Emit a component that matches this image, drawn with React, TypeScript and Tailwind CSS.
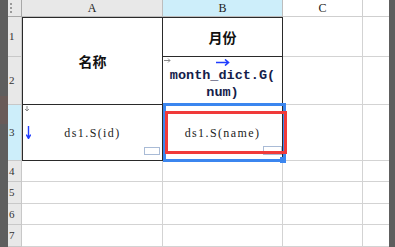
import React from "react";

const grid = "border-r border-b border-[#d3d3d3]";
const mono = { fontFamily: '"Liberation Mono", "Noto Sans CJK SC", monospace' };
const serif = { fontFamily: '"Liberation Serif", "Noto Sans CJK SC", serif' };
const cjk = { fontFamily: '"Noto Sans CJK SC", "Liberation Sans", sans-serif' };

function RowNum({ n, row, active }: { n: number; row: string; active?: boolean }) {
  return (
    <div
      className={`col-start-2 ${row} flex items-center pl-[1px] border-r border-b border-[#c8c8c8] ${
        active ? "bg-[#cdeefa]" : "bg-[#e8e8e8]"
      }`}
    >
      <span className="text-[11px] text-[#333]" style={serif}>
        {n}
      </span>
    </div>
  );
}

function DownArrow({ className }: { className: string }) {
  return (
    <svg width="6" height="6" viewBox="0 0 6 6" className={className}>
      <path d="M3 0V5M1 3L3 5L5 3" stroke="#8a8a8a" strokeWidth="1" fill="none" />
    </svg>
  );
}

function RightArrow({ className }: { className: string }) {
  return (
    <svg width="7" height="5" viewBox="0 0 7 5" className={className}>
      <path d="M0 2.5H6M4 0.5L6 2.5L4 4.5" stroke="#8a8a8a" strokeWidth="1" fill="none" />
    </svg>
  );
}

export default function App() {
  return (
    <div className="relative w-[395px] h-[247px] overflow-hidden bg-white">
      <div className="grid grid-cols-[8px_14px_141px_120px_80px_26px_6px] grid-rows-[17px_40px_48px_56px_21px_22px_21px_22px]">
        {/* side strips */}
        <div className="col-start-1 row-start-1 row-span-8 bg-[#5e5e5e] relative">
          <div className="absolute left-0 top-[96px] w-[8px] h-[28px] bg-[#6e5a55] opacity-70" />
        </div>
        <div className="col-start-7 row-start-1 row-span-8 bg-[#5e5e5e]" />

        {/* header row */}
        <div className="col-start-2 row-start-1 bg-[#e8e8e8] border-r border-b border-[#a8a8a8] flex flex-col gap-[2px] pt-[3px] pl-[2px]">
          <span className="block w-[2px] h-[2px] bg-[#9a9a9a]" />
          <span className="block w-[2px] h-[2px] bg-[#9a9a9a]" />
          <span className="block w-[2px] h-[2px] bg-[#9a9a9a]" />
        </div>
        <div className="col-start-3 row-start-1 bg-[#e8e8e8] border-r border-b border-[#bdbdbd] flex items-center justify-center text-[12px] text-[#222]" style={serif}>
          A
        </div>
        <div className="col-start-4 row-start-1 bg-[#cdeefa] border-r border-b border-[#bdbdbd] flex items-center justify-center text-[12px] text-[#222]" style={serif}>
          B
        </div>
        <div className="col-start-5 row-start-1 bg-white border-r border-b border-[#cfcfcf] flex items-center justify-center text-[12px] text-[#222]" style={serif}>
          C
        </div>
        <div className="col-start-6 row-start-1 bg-white border-b border-[#cfcfcf]" />

        {/* row numbers */}
        <RowNum n={1} row="row-start-2" />
        <RowNum n={2} row="row-start-3" />
        <RowNum n={3} row="row-start-4" active />
        <RowNum n={4} row="row-start-5" />
        <RowNum n={5} row="row-start-6" />
        <RowNum n={6} row="row-start-7" />
        <RowNum n={7} row="row-start-8" />

        {/* A1:A2 merged */}
        <div
          className="col-start-3 row-start-2 row-span-2 border border-[#2a2a2a] flex items-center justify-center text-[14px] font-bold text-[#111]"
          style={cjk}
        >
          名称
        </div>
        {/* B1 */}
        <div
          className="col-start-4 row-start-2 border-t border-r border-b border-[#2a2a2a] flex items-center justify-center text-[14px] font-bold text-[#111]"
          style={cjk}
        >
          月份
        </div>
        {/* B2 */}
        <div className="col-start-4 row-start-3 relative border-r border-b border-[#2a2a2a] flex flex-col items-center justify-center pt-[6px] leading-[17px]">
          <RightArrow className="absolute left-[1px] top-[1px]" />
          <svg width="14" height="7" viewBox="0 0 14 7" className="absolute left-[53px] top-[2px]">
            <path d="M0 3.5H12M9 0.5L12.5 3.5L9 6.5" stroke="#1f3cff" strokeWidth="1.6" fill="none" />
          </svg>
          <span className="text-[13.5px] font-bold text-[#14204a]" style={mono}>
            month_dict.G(
          </span>
          <span className="text-[13.5px] font-bold text-[#14204a]" style={mono}>
            num)
          </span>
        </div>

        {/* A3 */}
        <div className="col-start-3 row-start-4 relative border-l border-r border-b border-[#2a2a2a] flex items-center justify-center">
          <DownArrow className="absolute left-[1px] top-[1px]" />
          <svg width="5" height="13" viewBox="0 0 5 13" className="absolute left-[3px] top-[21px]">
            <path d="M2.5 0V12M0.3 8.5L2.5 12.5L4.7 8.5" stroke="#1f3cff" strokeWidth="1.4" fill="none" />
          </svg>
          <span className="text-[12px] text-[#222] tracking-[1.4px]" style={serif}>
            ds1.S(id)
          </span>
          <div className="absolute right-[2px] bottom-[5px] w-[16px] h-[8px] border border-[#a9bbd6]" />
        </div>
        {/* B3 */}
        <div className="col-start-4 row-start-4 relative border-r border-b border-[#2a2a2a] flex items-center justify-center">
          <span className="text-[12px] text-[#222] tracking-[1.4px]" style={serif}>
            ds1.S(name)
          </span>
          <div className="absolute right-[0px] bottom-[5px] w-[19px] h-[9px] border border-[#a9bbd6]" />
        </div>

        {/* plain cells */}
        <div className={`col-start-5 row-start-2 ${grid}`} />
        <div className={`col-start-6 row-start-2 border-b border-[#d3d3d3]`} />
        <div className={`col-start-5 row-start-3 ${grid}`} />
        <div className={`col-start-6 row-start-3 border-b border-[#d3d3d3]`} />
        <div className={`col-start-5 row-start-4 ${grid}`} />
        <div className={`col-start-6 row-start-4 border-b border-[#d3d3d3]`} />

        {["row-start-5", "row-start-6", "row-start-7", "row-start-8"].map((r) => (
          <React.Fragment key={r}>
            <div className={`col-start-3 ${r} ${grid}`} />
            <div className={`col-start-4 ${r} ${grid}`} />
            <div className={`col-start-5 ${r} ${grid}`} />
            <div className={`col-start-6 ${r} border-b border-[#d3d3d3]`} />
          </React.Fragment>
        ))}
      </div>

      {/* selection frame on B3 */}
      <div className="absolute left-[163px] top-[103px] w-[123px] h-[59px] border-[3px] border-[#3b86ef]" />
      <div className="absolute left-[280px] top-[157px] w-[6px] h-[6px] bg-[#3b86ef]" />
      <div className="absolute left-[165px] top-[111px] w-[122px] h-[43px] border-[3px] border-[#f03a3a]" />
    </div>
  );
}
